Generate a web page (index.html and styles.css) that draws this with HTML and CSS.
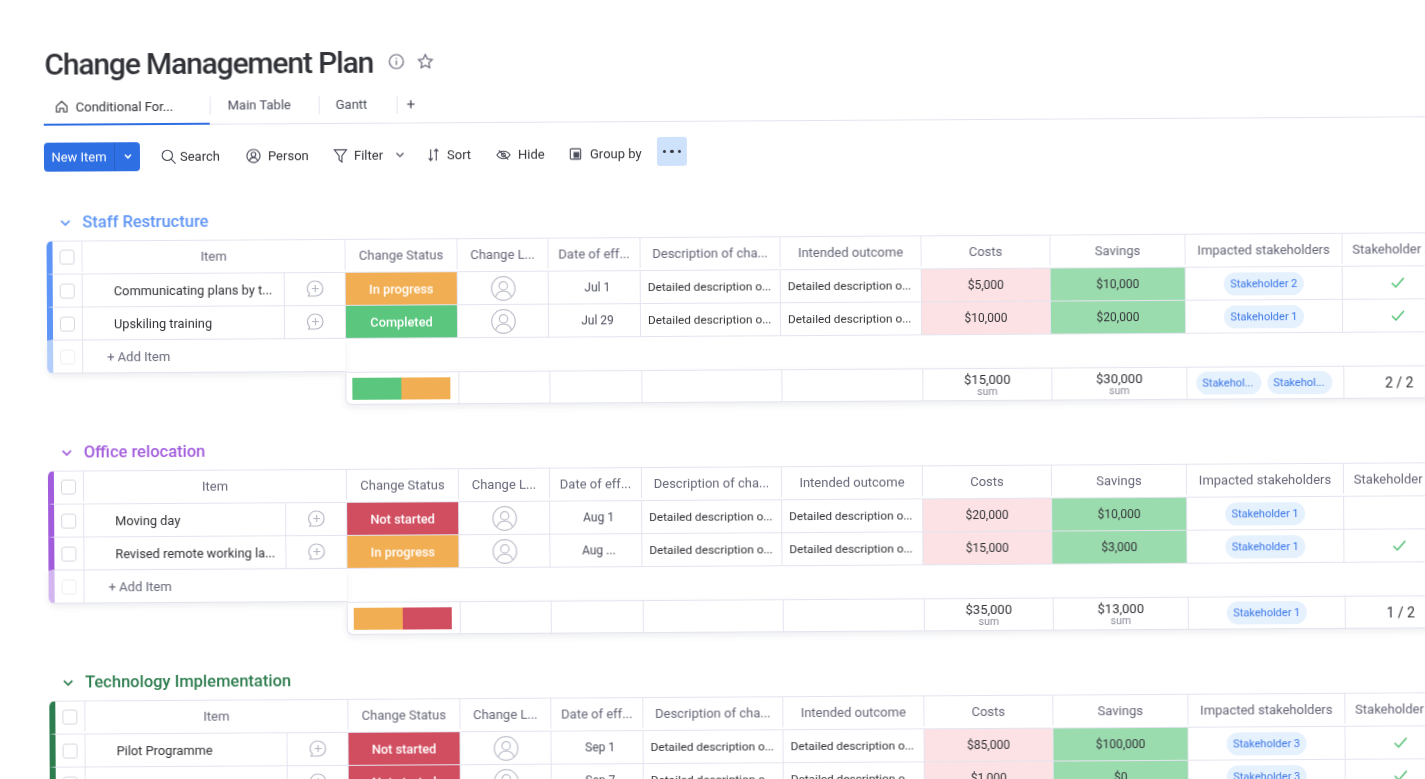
FILE: index.html
```html
<!DOCTYPE html>
<html lang="en">

<head>
  <meta charset="UTF-8" />
  <title>Change Management Plan</title>
  <link rel="stylesheet" href="styles.css">
</head>

<body>
  <div class="page">
    <div class="title-bar">
      <h1>Change Management Plan</h1>
      <svg class="title-icon" viewBox="0 0 16 16"><circle cx="8" cy="8" r="7"/><path d="M8 7v4.500M8 4.200v1.200"/></svg>
      <svg class="title-icon" viewBox="0 0 16 16"><path d="M8 1.200l2.100 4.400 4.800.6-3.500 3.300.9 4.800L8 12l-4.300 2.300.9-4.800L1.100 6.200l4.800-.6z"/></svg>
    </div>

    <div class="tabs">
      <div class="tab tab-active">
        <svg class="tab-icon" viewBox="0 0 16 16"><path d="M2 7.500L8 2l6 5.500V14h-3.800v-4H5.800v4H2z"/></svg>
        Conditional For...
      </div>
      <div class="tab tab-main">Main Table</div>
      <div class="tab tab-gantt">Gantt</div>
      <div class="tab tab-plus">+</div>
    </div>

    <div class="toolbar">
      <div class="new-item">
        <span class="new-item-label">New Item</span>
        <span class="new-item-arrow"><svg viewBox="0 0 10 10"><path d="M2 3.500l3 3 3-3"/></svg></span>
      </div>
      <div class="tool tool-search">
        <svg viewBox="0 0 16 16"><circle cx="6.800" cy="6.800" r="5.500"/><path d="M10.800 10.800L15.500 15.500"/></svg>Search
      </div>
      <div class="tool tool-person">
        <svg viewBox="0 0 16 16"><circle cx="8" cy="8" r="7"/><circle cx="8" cy="6.500" r="2.500"/><path d="M3.500 13c.8-2.300 2.500-3.300 4.500-3.300s3.700 1 4.500 3.300"/></svg>Person
      </div>
      <div class="tool tool-filter">
        <svg viewBox="0 0 16 16"><path d="M1.500 2h13L9.500 8.500V15L6.500 12.500v-4z"/></svg>Filter
        <svg class="tool-arrow" viewBox="0 0 10 10"><path d="M1.500 3.500L5 7l3.500-3.500"/></svg>
      </div>
      <div class="tool tool-sort">
        <svg viewBox="0 0 16 16"><path d="M5 2v12M2.800 11.500L5 14l2.200-2.500M11 14V2M8.800 4.500L11 2l2.200 2.500"/></svg>Sort
      </div>
      <div class="tool tool-hide">
        <svg viewBox="0 0 16 16"><path d="M1 8.500c1.700-2.700 4-4 7-4s5.300 1.300 7 4c-1.700 2.700-4 4-7 4s-5.300-1.300-7-4z"/><circle cx="8" cy="8.500" r="2"/><path d="M3 3.500l10 10"/></svg>Hide
      </div>
      <div class="tool tool-group">
        <svg viewBox="0 0 16 16"><rect x="2.500" y="2.500" width="11" height="11" rx="1"/><rect class="solid" x="6.500" y="6.500" width="5" height="5"/></svg>Group by
      </div>
      <div class="more-btn"><i></i><i></i><i></i></div>
    </div>

    <section class="group group-blue">
      <div class="group-title">
        <svg viewBox="0 0 10 10"><path d="M1.500 3.500L5 7l3.500-3.500"/></svg>Staff Restructure
      </div>
      <div class="row row-head">
        <div class="cell check"><b></b></div>
        <div class="cell span-item">Item</div>
        <div class="cell">Change Status</div>
        <div class="cell">Change L...</div>
        <div class="cell">Date of eff...</div>
        <div class="cell">Description of cha...</div>
        <div class="cell">Intended outcome</div>
        <div class="cell">Costs</div>
        <div class="cell">Savings</div>
        <div class="cell">Impacted stakeholders</div>
        <div class="cell">Stakeholder ...</div>
      </div>
      <div class="row">
        <div class="cell check"><b></b></div>
        <div class="cell name">Communicating plans by t...</div>
        <div class="cell"><svg class="comment" viewBox="0 0 20 20"><path d="M10.500 2a7.500 7.500 0 0 1 0 15H3.500l1.200-2.300A7.500 7.500 0 0 1 10.500 2z"/><path d="M10.500 6v7M7 9.500h7"/></svg></div>
        <div class="cell status orange">In progress</div>
        <div class="cell"><svg class="avatar" viewBox="0 0 24 24"><circle cx="12" cy="12" r="11.300"/><circle cx="12" cy="9.500" r="4"/><path d="M4.500 20c1.300-4 4-5.500 7.500-5.500s6.200 1.500 7.500 5.500"/></svg></div>
        <div class="cell date">Jul 1</div>
        <div class="cell detail">Detailed description o...</div>
        <div class="cell detail">Detailed description o...</div>
        <div class="cell money pink">$5,000</div>
        <div class="cell money mint">$10,000</div>
        <div class="cell"><span class="pill">Stakeholder 2</span></div>
        <div class="cell"><svg class="tick" viewBox="0 0 14 12"><path d="M1 6.500l4 4L13 1.500"/></svg></div>
      </div>
      <div class="row">
        <div class="cell check"><b></b></div>
        <div class="cell name">Upskiling training</div>
        <div class="cell"><svg class="comment" viewBox="0 0 20 20"><path d="M10.500 2a7.500 7.500 0 0 1 0 15H3.500l1.200-2.300A7.500 7.500 0 0 1 10.500 2z"/><path d="M10.500 6v7M7 9.500h7"/></svg></div>
        <div class="cell status green">Completed</div>
        <div class="cell"><svg class="avatar" viewBox="0 0 24 24"><circle cx="12" cy="12" r="11.300"/><circle cx="12" cy="9.500" r="4"/><path d="M4.500 20c1.300-4 4-5.500 7.500-5.500s6.200 1.500 7.500 5.500"/></svg></div>
        <div class="cell date">Jul 29</div>
        <div class="cell detail">Detailed description o...</div>
        <div class="cell detail">Detailed description o...</div>
        <div class="cell money pink">$10,000</div>
        <div class="cell money mint">$20,000</div>
        <div class="cell"><span class="pill">Stakeholder 1</span></div>
        <div class="cell"><svg class="tick" viewBox="0 0 14 12"><path d="M1 6.500l4 4L13 1.500"/></svg></div>
      </div>
      <div class="add-row">
        <div class="cell check"><b></b></div>
        <div class="cell add-label">+ Add Item</div>
      </div>
      <div class="summary">
        <div class="cell"><div class="mix"><i class="green"></i><i class="orange"></i></div></div>
        <div class="cell"></div>
        <div class="cell"></div>
        <div class="cell"></div>
        <div class="cell"></div>
        <div class="cell total"><span>$15,000</span><small>sum</small></div>
        <div class="cell total"><span>$30,000</span><small>sum</small></div>
        <div class="cell pills"><span class="pill pill-wide">Stakehol...</span><span class="pill pill-wide">Stakehol...</span></div>
        <div class="cell ratio">2 / 2</div>
      </div>
    </section>

    <section class="group group-purple">
      <div class="group-title">
        <svg viewBox="0 0 10 10"><path d="M1.500 3.500L5 7l3.500-3.500"/></svg>Office relocation
      </div>
      <div class="row row-head">
        <div class="cell check"><b></b></div>
        <div class="cell span-item">Item</div>
        <div class="cell">Change Status</div>
        <div class="cell">Change L...</div>
        <div class="cell">Date of eff...</div>
        <div class="cell">Description of cha...</div>
        <div class="cell">Intended outcome</div>
        <div class="cell">Costs</div>
        <div class="cell">Savings</div>
        <div class="cell">Impacted stakeholders</div>
        <div class="cell">Stakeholder ...</div>
      </div>
      <div class="row">
        <div class="cell check"><b></b></div>
        <div class="cell name">Moving day</div>
        <div class="cell"><svg class="comment" viewBox="0 0 20 20"><path d="M10.500 2a7.500 7.500 0 0 1 0 15H3.500l1.200-2.300A7.500 7.500 0 0 1 10.500 2z"/><path d="M10.500 6v7M7 9.500h7"/></svg></div>
        <div class="cell status red">Not started</div>
        <div class="cell"><svg class="avatar" viewBox="0 0 24 24"><circle cx="12" cy="12" r="11.300"/><circle cx="12" cy="9.500" r="4"/><path d="M4.500 20c1.300-4 4-5.500 7.500-5.500s6.200 1.500 7.500 5.500"/></svg></div>
        <div class="cell date">Aug 1</div>
        <div class="cell detail">Detailed description o...</div>
        <div class="cell detail">Detailed description o...</div>
        <div class="cell money pink">$20,000</div>
        <div class="cell money mint">$10,000</div>
        <div class="cell"><span class="pill">Stakeholder 1</span></div>
        <div class="cell"></div>
      </div>
      <div class="row">
        <div class="cell check"><b></b></div>
        <div class="cell name">Revised remote working la...</div>
        <div class="cell"><svg class="comment" viewBox="0 0 20 20"><path d="M10.500 2a7.500 7.500 0 0 1 0 15H3.500l1.200-2.300A7.500 7.500 0 0 1 10.500 2z"/><path d="M10.500 6v7M7 9.500h7"/></svg></div>
        <div class="cell status orange">In progress</div>
        <div class="cell"><svg class="avatar" viewBox="0 0 24 24"><circle cx="12" cy="12" r="11.300"/><circle cx="12" cy="9.500" r="4"/><path d="M4.500 20c1.300-4 4-5.500 7.500-5.500s6.200 1.500 7.500 5.500"/></svg></div>
        <div class="cell date">Aug ...</div>
        <div class="cell detail">Detailed description o...</div>
        <div class="cell detail">Detailed description o...</div>
        <div class="cell money pink">$15,000</div>
        <div class="cell money mint">$3,000</div>
        <div class="cell"><span class="pill">Stakeholder 1</span></div>
        <div class="cell"><svg class="tick" viewBox="0 0 14 12"><path d="M1 6.500l4 4L13 1.500"/></svg></div>
      </div>
      <div class="add-row">
        <div class="cell check"><b></b></div>
        <div class="cell add-label">+ Add Item</div>
      </div>
      <div class="summary">
        <div class="cell"><div class="mix"><i class="orange"></i><i class="red"></i></div></div>
        <div class="cell"></div>
        <div class="cell"></div>
        <div class="cell"></div>
        <div class="cell"></div>
        <div class="cell total"><span>$35,000</span><small>sum</small></div>
        <div class="cell total"><span>$13,000</span><small>sum</small></div>
        <div class="cell"><span class="pill">Stakeholder 1</span></div>
        <div class="cell ratio">1 / 2</div>
      </div>
    </section>

    <section class="group group-green">
      <div class="group-title">
        <svg viewBox="0 0 10 10"><path d="M1.500 3.500L5 7l3.500-3.500"/></svg>Technology Implementation
      </div>
      <div class="row row-head">
        <div class="cell check"><b></b></div>
        <div class="cell span-item">Item</div>
        <div class="cell">Change Status</div>
        <div class="cell">Change L...</div>
        <div class="cell">Date of eff...</div>
        <div class="cell">Description of cha...</div>
        <div class="cell">Intended outcome</div>
        <div class="cell">Costs</div>
        <div class="cell">Savings</div>
        <div class="cell">Impacted stakeholders</div>
        <div class="cell">Stakeholder ...</div>
      </div>
      <div class="row">
        <div class="cell check"><b></b></div>
        <div class="cell name">Pilot Programme</div>
        <div class="cell"><svg class="comment" viewBox="0 0 20 20"><path d="M10.500 2a7.500 7.500 0 0 1 0 15H3.500l1.200-2.300A7.500 7.500 0 0 1 10.500 2z"/><path d="M10.500 6v7M7 9.500h7"/></svg></div>
        <div class="cell status red">Not started</div>
        <div class="cell"><svg class="avatar" viewBox="0 0 24 24"><circle cx="12" cy="12" r="11.300"/><circle cx="12" cy="9.500" r="4"/><path d="M4.500 20c1.300-4 4-5.500 7.500-5.500s6.200 1.500 7.500 5.500"/></svg></div>
        <div class="cell date">Sep 1</div>
        <div class="cell detail">Detailed description o...</div>
        <div class="cell detail">Detailed description o...</div>
        <div class="cell money pink">$85,000</div>
        <div class="cell money mint">$100,000</div>
        <div class="cell"><span class="pill">Stakeholder 3</span></div>
        <div class="cell"><svg class="tick" viewBox="0 0 14 12"><path d="M1 6.500l4 4L13 1.500"/></svg></div>
      </div>
      <div class="row">
        <div class="cell check"><b></b></div>
        <div class="cell name"></div>
        <div class="cell"><svg class="comment" viewBox="0 0 20 20"><path d="M10.500 2a7.500 7.500 0 0 1 0 15H3.500l1.200-2.300A7.500 7.500 0 0 1 10.500 2z"/><path d="M10.500 6v7M7 9.500h7"/></svg></div>
        <div class="cell status red">Not started</div>
        <div class="cell"><svg class="avatar" viewBox="0 0 24 24"><circle cx="12" cy="12" r="11.300"/><circle cx="12" cy="9.500" r="4"/><path d="M4.500 20c1.300-4 4-5.500 7.500-5.500s6.200 1.500 7.500 5.500"/></svg></div>
        <div class="cell date">Sep 7</div>
        <div class="cell detail">Detailed description o...</div>
        <div class="cell detail">Detailed description o...</div>
        <div class="cell money pink">$1,000</div>
        <div class="cell money mint">$0</div>
        <div class="cell"><span class="pill">Stakeholder 3</span></div>
        <div class="cell"><svg class="tick" viewBox="0 0 14 12"><path d="M1 6.500l4 4L13 1.500"/></svg></div>
      </div>
    </section>
  </div>
</body>

</html>
```

FILE: styles.css
```css
html,
body {
  margin: 0;
  padding: 0;
  height: 100%;
  overflow: hidden;
  background-color: #fff;
}

body {
  font-family: 'Roboto', 'Liberation Sans', sans-serif;
  color: #323338;
}

/* the whole board sits slightly tilted and soft in the picture */
.page {
  width: 1500px;
  padding-left: 43px;
  transform: rotate(-0.35deg);
  transform-origin: 0 0;
  filter: blur(0.25px);
}

svg {
  fill: none;
  stroke: currentColor;
  stroke-width: 1.200;
}

.title-bar {
  display: flex;
  align-items: center;
  height: 48px;
  padding-top: 40px;
  padding-left: 1px;
  color: #676879;
}

h1 {
  margin: 0 15px 0 0;
  font-size: 30px;
  font-weight: 500;
  letter-spacing: -1.150px;
  color: #323338;
}

.title-icon {
  width: 16px;
  height: 16px;
  margin-right: 13px;
}

.tabs {
  display: flex;
  align-items: center;
  height: 37px;
  font-size: 13px;
  color: #4b4e5c;
  width: 1400px;
  border-bottom: 1px solid #e4e4f0;
}

.tab {
  display: flex;
  align-items: center;
  box-sizing: border-box;
}

.tab-active {
  width: 166px;
  height: 38px;
  padding-left: 11px;
  padding-top: 2px;
  color: #323338;
  border-bottom: 2px solid #2f6fe4;
  margin-bottom: -1px;
}

.tab-icon {
  width: 14px;
  height: 14px;
  margin-right: 7px;
}

.tab-main {
  width: 109px;
  height: 18px;
  padding-left: 17px;
  border-left: 1px solid #e4e4f0;
}

.tab-gantt {
  width: 78px;
  height: 18px;
  padding-left: 16px;
  border-left: 1px solid #e4e4f0;
}

.tab-plus {
  height: 18px;
  padding-left: 9px;
  font-size: 15px;
  border-left: 1px solid #e4e4f0;
}

.toolbar {
  display: flex;
  align-items: center;
  height: 30px;
  margin-top: 16px;
  font-size: 13px;
  color: #323338;
}

.new-item {
  display: flex;
  width: 96px;
  height: 29px;
  color: #fff;
  background-color: #2f6fe4;
  border-radius: 4px;
  align-items: stretch;
}

.new-item-label {
  display: flex;
  align-items: center;
  justify-content: center;
  width: 70px;
}

.new-item-arrow {
  display: flex;
  align-items: center;
  justify-content: center;
  width: 25px;
  border-left: 1px solid #2860c6;
}

.new-item-arrow svg {
  width: 10px;
  height: 10px;
  stroke-width: 1.600;
}

.tool {
  display: flex;
  align-items: center;
  gap: 6px;
}

.tool svg {
  width: 15px;
  height: 15px;
  color: #4b4e5c;
}

.tool svg .solid {
  fill: currentColor;
}

.tool .tool-arrow {
  width: 10px;
  height: 10px;
  margin-left: 6px;
}

.tool-search { margin-left: 21px; width: 85px; gap: 4px; }
.tool-person { width: 87px; gap: 7px; }
.tool-filter { width: 93px; }
.tool-sort { width: 70px; }
.tool-hide { width: 72px; gap: 7px; }
.tool-group { width: 89px; gap: 7px; }

.more-btn {
  display: flex;
  align-items: center;
  justify-content: center;
  gap: 4px;
  width: 30px;
  height: 29px;
  background-color: #cfe2fb;
  border-radius: 3px;
  margin-bottom: 3px;
}

.more-btn i {
  width: 3.500px;
  height: 3.500px;
  border-radius: 50%;
  background-color: #323338;
}

/* groups */
.group {
  --tone: #5f95f6;
  --tone-soft: #b4cefb;
  margin-left: 2px;
  margin-top: 29px;
}

.group-blue { margin-top: 34px; }
.group-purple { --tone: #a25ddc; --tone-soft: #d3b5ef; }
.group-green { --tone: #2e7d4f; --tone-soft: #9fc7ae; }

.group-title {
  display: flex;
  align-items: center;
  height: 35px;
  padding-bottom: 2px;
  box-sizing: border-box;
  font-size: 16.500px;
  font-weight: 500;
  color: var(--tone);
}

.group-title svg {
  width: 12px;
  height: 12px;
  margin: 0 11px 0 13px;
  stroke-width: 1.400;
}

.row,
.add-row,
.summary {
  display: grid;
  height: 33px;
  box-sizing: border-box;
  font-size: 13px;
  color: #323338;
}

.row {
  grid-template-columns: 30px 202px 61px 112px 91px 92px 140px 141px 129px 135px 157px 139px;
  border-left: 6px solid var(--tone);
  border-bottom: 1px solid #e4e4f0;
}

.row-head {
  grid-template-columns: 30px 263px 112px 91px 92px 140px 141px 129px 135px 157px 139px;
  height: 34px;
  padding-bottom: 2px;
  border-top: 1px solid #e4e4f0;
  border-top-left-radius: 6px;
  color: #676879;
}

.cell {
  display: flex;
  align-items: center;
  justify-content: center;
  min-width: 0;
  white-space: nowrap;
  overflow: hidden;
  border-right: 1px solid #e4e4f0;
}

/* last column runs off the page, its content stays centred on the visible part */
.row .cell:last-child,
.summary .cell:last-child {
  padding-right: 29px;
  border-right: 0;
}

.row-head .cell:last-child {
  padding-right: 37px;
}

.check b {
  width: 15px;
  height: 15px;
  box-sizing: border-box;
  border: 1px solid #d5d8df;
  border-radius: 3px;
}

.name {
  justify-content: flex-start;
  padding-left: 31px;
  font-size: 12.800px;
}

.date {
  padding-left: 6px;
  font-size: 12px;
  color: #4b4e5c;
}

.detail {
  justify-content: flex-start;
  padding-left: 7px;
  font-size: 11.800px;
}

.money {
  font-size: 12px;
}

.status {
  color: #fff;
  font-size: 12.800px;
  font-weight: 500;
}

.orange { background-color: #f2ae52; }
.green { background-color: #5bc67e; }
.red { background-color: #d14e60; }
.pink { background-color: #fce2e4; }
.mint { background-color: #9bdcae; }

.comment {
  width: 20px;
  height: 20px;
  color: #b5b7c4;
}

.avatar {
  width: 25px;
  height: 25px;
  color: #bfc1cc;
}

.tick {
  width: 14px;
  height: 12px;
  color: #4fbf72;
  stroke-width: 1.500;
}

.pill {
  display: inline-block;
  padding: 4px 6px;
  font-size: 11px;
  line-height: 15px;
  color: #3b78e7;
  background-color: #e6f1fe;
  border-radius: 12px;
}

.pill-wide {
  width: 65px;
  padding: 4px 0 4px 6px;
  box-sizing: border-box;
}

.pills {
  gap: 6px;
  padding-right: 2px;
}

.add-row {
  grid-template-columns: 30px 262px;
  width: 298px;
  border-left: 6px solid var(--tone-soft);
  border-bottom: 1px solid #e4e4f0;
  border-bottom-left-radius: 6px;
  box-shadow: 0 3px 6px rgba(80, 85, 120, 0.1);
  color: #676879;
}

.add-row .check b {
  border-color: #eceef2;
}

.add-row .cell:last-child {
  border-right: 0;
}

.add-label {
  justify-content: flex-start;
  padding-left: 24px;
}

.summary {
  grid-template-columns: 113px 91px 92px 140px 141px 129px 135px 157px 139px;
  width: 1138px;
  margin-left: 298px;
  position: relative;
  background-color: #fff;
  border-top: 1px solid #e4e4f0;
  border-bottom: 1px solid #e4e4f0;
  border-left: 1px solid #e4e4f0;
  border-bottom-left-radius: 6px;
  box-shadow: 0 3px 6px rgba(80, 85, 120, 0.1);
}

.mix {
  display: flex;
  width: 98px;
  height: 22px;
  margin-right: 2px;
}

.mix i {
  flex: 1;
}

.total {
  flex-direction: column;
  font-size: 13px;
  line-height: 13px;
}

.total small {
  font-size: 10.500px;
  line-height: 11px;
  color: #8a8c99;
}

.ratio {
  font-size: 14px;
}
```
